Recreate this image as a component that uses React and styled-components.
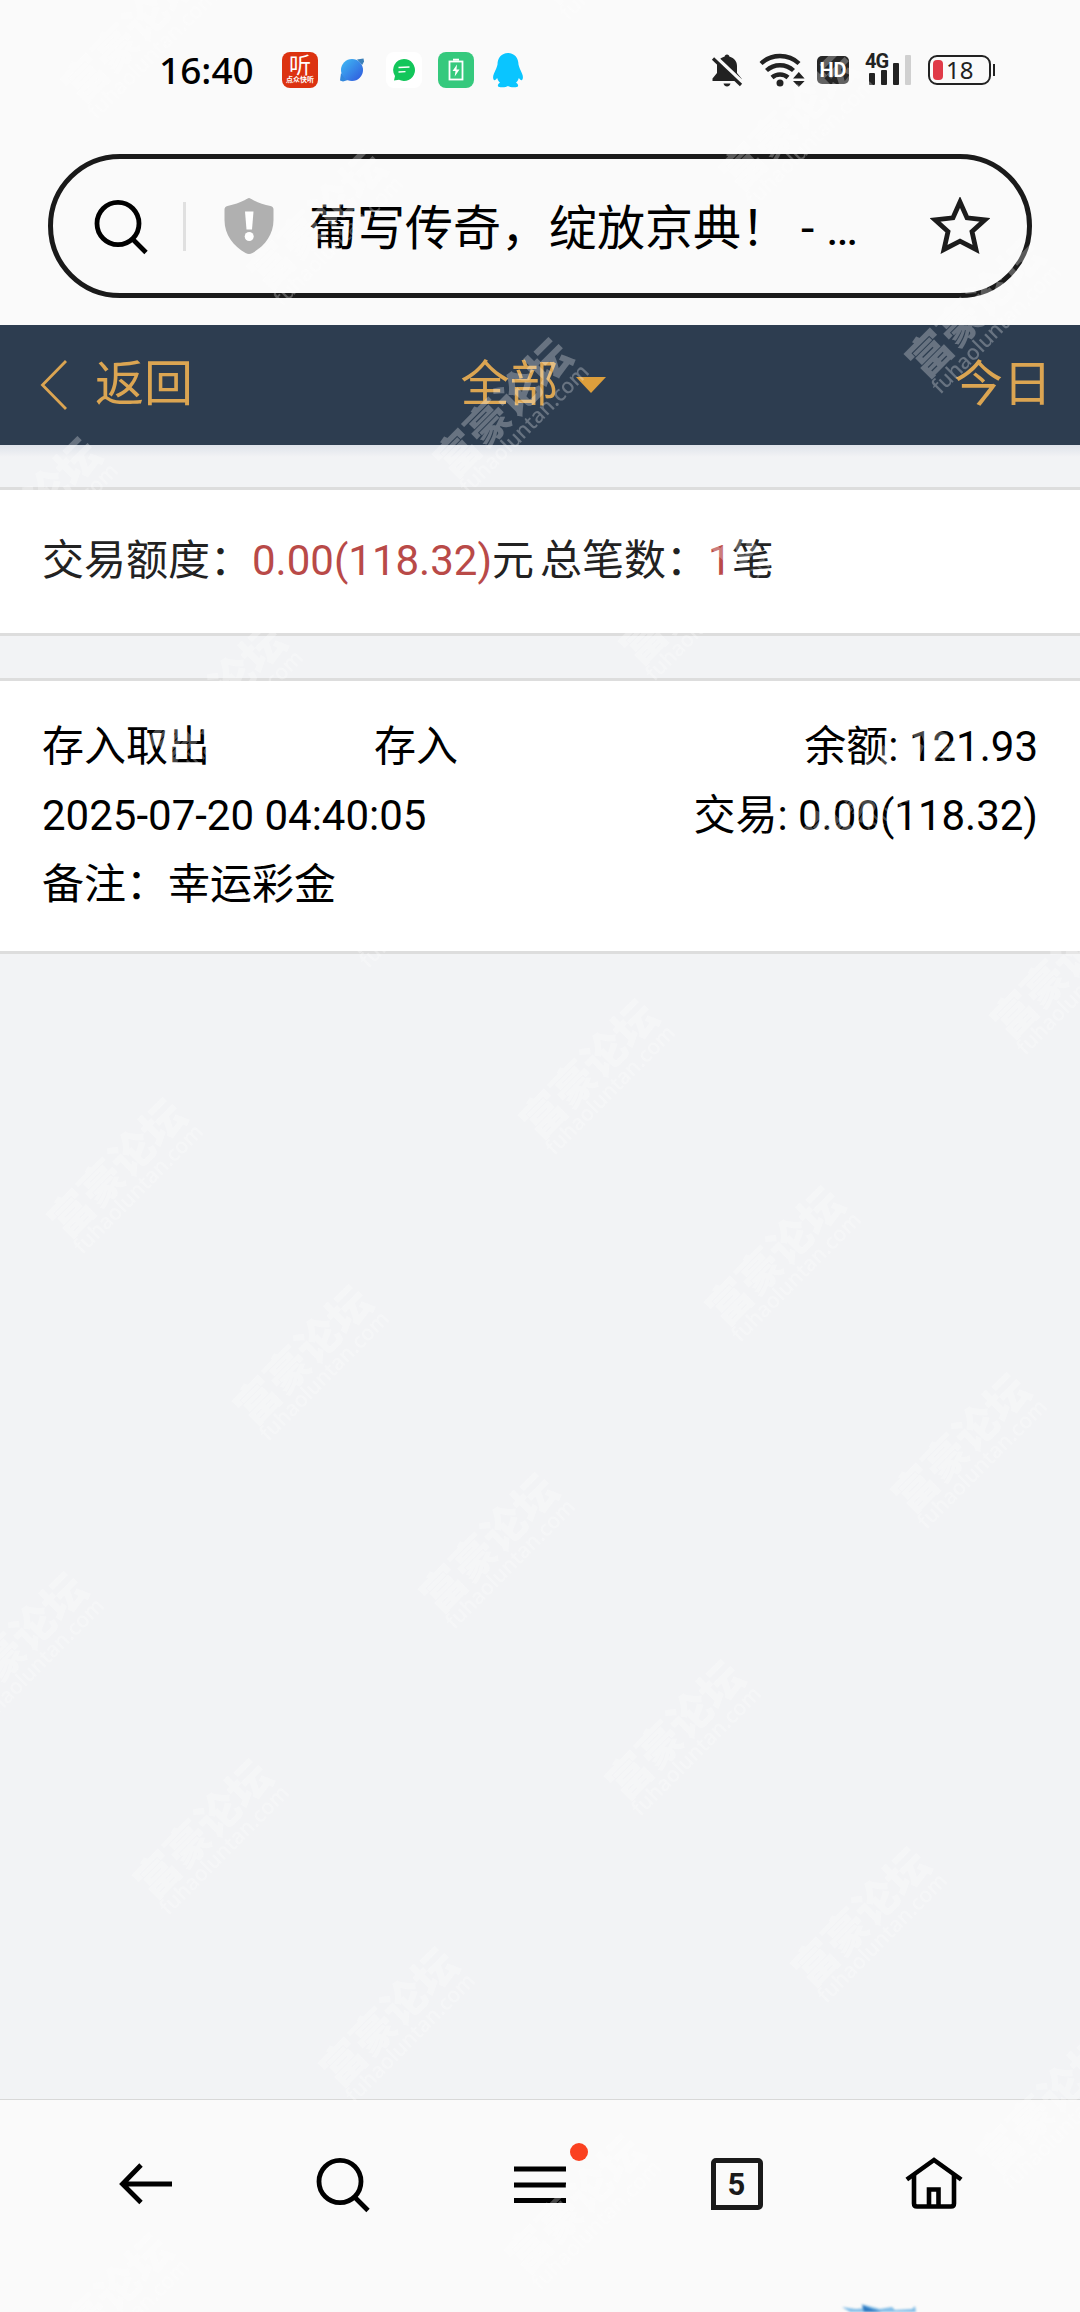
import React from 'react'
import styled, { createGlobalStyle } from 'styled-components'


const marks = []
for (let i = -8; i < 14; i++) {
  for (let j = -4; j < 6; j++) {
    const x = 510 + i * 185.8 + j * 471.5
    const y = 414.6 + i * 187.2 - j * 99.5
    if (x > -60 && x < 1140 && y > -60 && y < 2372) {
      marks.push({ x, y })
    }
  }
}


function StatusBar() {
  return (
    <Status>
      <Clock>16:40</Clock>
      <AppIcons>
        <ListenTile>
          <ListenBig>听</ListenBig>
          <ListenSmall>点众快听</ListenSmall>
        </ListenTile>

        <svg width="36" height="36" viewBox="0 0 36 36">
          <defs>
            <linearGradient id="planet" x1="0" y1="0" x2="1" y2="1">
              <stop offset="0" stopColor="#3fbdf5" />
              <stop offset="1" stopColor="#2f55dc" />
            </linearGradient>
          </defs>
          <path d="M23 7.5 29.500 6.500 30 9.500 28.200 13Z" fill="#3b7fb8" />
          <path d="M7 21 6 28.500 9 29.500 14 28Z" fill="#3287dc" />
          <circle cx="18" cy="18" r="11" fill="url(#planet)" />
        </svg>

        <ChatTile>
          <svg width="30" height="30" viewBox="0 0 30 30">
            <path d="M15 4a11 11 0 1 1-5 20.800L5 25.500 6 21A11 11 0 0 1 15 4Z" fill="#12c65a" />
            <path d="M9.500 12.500 20.500 12M9.500 17 16.500 16.700" stroke="#fff" strokeWidth="1.300" />
          </svg>
        </ChatTile>

        <svg width="36" height="36" viewBox="0 0 36 36">
          <rect width="36" height="36" rx="8" fill="#35c97d" />
          <rect x="11.500" y="9.500" width="13" height="18" fill="none" stroke="#fff" strokeWidth="1.800" />
          <path d="M15 7.700h6" stroke="#fff" strokeWidth="2" />
          <path d="M19 12.500 14.500 19h3l-.8 5.500L21.500 17.500h-3Z" fill="#fff" />
        </svg>

        <Penguin width="32" height="36" viewBox="0 0 32 36">
          <path
            d="M16 1C9.500 1 5.500 6 5.500 12.500 5 15 3.500 18 2 21.500c-1.500 3-1 6.500.3 6.700 1 .2 2-1 2.900-2.200.6 2 1.500 3.500 2.800 4.800-2 .8-2.800 3.200-1.500 3.900 3 .9 7.500.6 9.500-.7 2 1.300 6.500 1.600 9.500.7 1.300-.7.5-3.100-1.500-3.900 1.300-1.300 2.200-2.800 2.800-4.800.9 1.200 1.900 2.400 2.900 2.200 1.300-.2 1.800-3.700.3-6.700-1.500-3.500-3-6.500-3.500-9C26.500 6 22.500 1 16 1Z"
            fill="#0ac5ff"
          />
        </Penguin>
      </AppIcons>

      <SystemIcons>
        <svg width="32" height="34" viewBox="0 0 32 34">
          <path d="M16 1.500c1.500 0 2.300 1 2.300 2C23.500 5 26 8.500 26 13v7l4.500 5.500V28h-29v-2.500L6 20v-7c0-4.500 2.500-8 7.700-9.500 0-1 .8-2 2.300-2Z" fill="#222" />
          <path d="M12.500 30.500h7c-.5 2-1.800 3-3.500 3s-3-1-3.500-3Z" fill="#222" />
          <path d="M4 3.500 31 29" stroke="#fafafa" strokeWidth="4" />
          <path d="M2 5.500 30 32" stroke="#222" strokeWidth="3.200" />
        </svg>

        <WifiIcon width="46" height="34" viewBox="0 0 46 34">
          <g fill="none" stroke="#222" strokeWidth="4.400">
            <path d="M2 10.500a28 28 0 0 1 38 0" />
            <path d="M7.500 17.500a20 20 0 0 1 27 0" />
            <path d="M13 24.500a12 12 0 0 1 16 0" />
          </g>
          <circle cx="21" cy="30" r="3.500" fill="#222" />
          <path d="M34 25.500 39.800 19 45.600 25.500ZM34 28 39.800 34 45.600 28Z" fill="#222" />
        </WifiIcon>

        <HdBadge>HD</HdBadge>

        <Signal>
          <SignalLabel>4G</SignalLabel>
          <SignalBar $h={12} />
          <SignalBar $h={15} />
          <SignalBar $h={22} />
          <SignalBar $h={30} $off />
        </Signal>

        <Battery>
          <BatteryLevel />
          18
        </Battery>
        <BatteryTip />
      </SystemIcons>
    </Status>
  )
}


function SearchIcon() {
  return (
    <svg width="58" height="58" viewBox="0 0 58 58" fill="none" stroke="#000" strokeWidth="4.800">
      <ellipse cx="26" cy="26.500" rx="21" ry="21.200" />
      <path d="M40 41.500 54 55.500" />
    </svg>
  )
}


function App() {
  return (
    <Page>
      <GlobalStyle />
      <StatusBar />

      <AddressBar>
        <SearchIcon />
        <Divider />
        <Shield width="50" height="56" viewBox="0 0 50 56">
          <path d="M25 0C26 0 27.500 1.200 29 2c5 2.600 11 4.600 17.500 6 2 .6 3 1.800 3 3.600V22c0 15-9 26-21 33-2.500 1.300-4.500 1.300-7 0C9.500 48 .5 37 .5 22V11.600C.5 9.800 1.500 8.600 3.500 8 10 6.600 16 4.600 21 2c1.500-.8 3-2 4-2Z" fill="#b0b0b0" />
          <path d="M21 13.500h8.500L28 31.500h-5.500Z" fill="#fff" />
          <circle cx="25.200" cy="38.500" r="4.500" fill="#fff" />
        </Shield>
        <PageTitle>葡写传奇，绽放京典！ - …</PageTitle>
        <svg width="60" height="58" viewBox="0 0 60 58" fill="none" stroke="#1c1c1c" strokeWidth="4.800">
          <path d="M30 5 37 20.800 55 22.800 42 34.500 46 52.500 30 44.200 14 52.500 18 34.500 5 22.800 23 20.800Z" />
        </svg>
      </AddressBar>

      <NavBar>
        <NavSide>
          <BackIcon width="28" height="52" viewBox="0 0 28 52">
            <path d="M26 2 2.500 26 26 50" fill="none" stroke="#dba552" strokeWidth="2.800" />
          </BackIcon>
          返回
        </NavSide>
        <NavCenter>
          全部
          <Caret />
        </NavCenter>
        <NavSide $end>今日</NavSide>
      </NavBar>

      <Content>
        <Summary>
          交易额度：<Red>0.00(118.32)</Red>元
          <Count>总笔数：<Red>1</Red>笔</Count>
        </Summary>

        <RecordCard>
          <RecordGrid>
            <span>存入取出</span>
            <span>存入</span>
            <Right>余额: 121.93</Right>
          </RecordGrid>
          <RecordRow>
            <span>2025-07-20 04:40:05</span>
            <span>交易: 0.00(118.32)</span>
          </RecordRow>
          <RecordRow>备注：幸运彩金</RecordRow>
        </RecordCard>
      </Content>

      <Toolbar>
        <Tool>
          <svg width="58" height="58" viewBox="0 0 58 58" fill="none" stroke="#000" strokeWidth="4.800">
            <path d="M55 29H6M24 10 5.500 29 24 47.500" />
          </svg>
        </Tool>
        <Tool>
          <SearchIcon />
        </Tool>
        <Tool>
          <svg width="58" height="58" viewBox="0 0 58 58" stroke="#000" strokeWidth="4.800">
            <path d="M3 14h52M3 30h52M3 45.500h52" />
          </svg>
          <Dot />
        </Tool>
        <Tool>
          <TabCount>5</TabCount>
        </Tool>
        <Tool>
          <svg width="58" height="58" viewBox="0 0 58 58" fill="none" stroke="#000" strokeWidth="4.600">
            <path d="M1.800 24.500 29 5 56.200 24.500" />
            <path d="M9 20v28.500q0 3 3 3h34q3 0 3-3V20" />
            <path d="M24 51V34.500h9.500V51" />
          </svg>
        </Tool>
      </Toolbar>

      <Sticker width="76" height="9" viewBox="0 0 76 9">
        <path d="M0 4 14 6 24 5 19 1 38 6 50 4 53 7 70 6 73 3 74 9H8Z" fill="#5aa8e0" opacity=".75" />
        <path d="M20 2 30 6 40 9H22Z" fill="#2c78c0" />
      </Sticker>

      <MarkLayer>
        {marks.map((m) => (
          <Mark key={`${m.x}-${m.y}`} style={{ left: m.x, top: m.y }}>
            <MarkName>富豪论坛</MarkName>
            <MarkSite>fuhaoluntan.com</MarkSite>
          </Mark>
        ))}
      </MarkLayer>
    </Page>
  )
}

export default App


const GlobalStyle = createGlobalStyle`
* {
  box-sizing: border-box;
}

body {
  margin: 0;
  background: #fafafa;
}

svg {
  display: block;
  flex: none;
}
`

const Page = styled.div`
position: relative;
display: flex;
flex-direction: column;
width: 1080px;
height: 2312px;
overflow: hidden;
background: #fafafa;
font-family: Roboto, "Noto Sans CJK SC", sans-serif;
`

const Status = styled.div`
display: flex;
align-items: center;
height: 154px;
padding: 0 85px 14px 159px;
`

const Clock = styled.div`
width: 123px;
font-family: "Noto Sans", sans-serif;
font-size: 37px;
font-weight: 500;
line-height: 40px;
white-space: nowrap;
`

const AppIcons = styled.div`
display: flex;
align-items: center;
gap: 16px;
`

const Penguin = styled.svg`
margin-left: 2px;
`

const ListenTile = styled.div`
display: flex;
flex-direction: column;
align-items: center;
width: 36px;
height: 36px;
border-radius: 8px;
background: #dc3210;
color: white;
`

const ListenBig = styled.div`
margin-top: 2px;
font-size: 22px;
line-height: 23px;
`

const ListenSmall = styled.div`
font-size: 7px;
font-weight: 700;
line-height: 7px;
white-space: nowrap;
`

const ChatTile = styled.div`
display: flex;
align-items: center;
justify-content: center;
width: 36px;
height: 36px;
border-radius: 8px;
background: white;
`

const SystemIcons = styled.div`
display: flex;
align-items: center;
margin-left: auto;
`

const WifiIcon = styled.svg`
margin-left: 16px;
`

const HdBadge = styled.div`
width: 32px;
height: 28px;
margin-left: 12px;
border-radius: 5px;
background: #262626;
color: white;
font-size: 20px;
font-weight: 700;
line-height: 28px;
text-align: center;
`

const Signal = styled.div`
position: relative;
display: flex;
align-items: flex-end;
gap: 6px;
height: 32px;
margin-left: 20px;
padding-bottom: 1px;
`

const SignalLabel = styled.div`
position: absolute;
left: -4px;
top: -2px;
color: #222;
font-size: 20px;
font-weight: 700;
line-height: 18px;
letter-spacing: -1px;
`

const SignalBar = styled.div`
width: 6px;
height: ${(p) => p.$h}px;
border-radius: 1px;
background: ${(p) => (p.$off ? '#d0d0d0' : '#222')};
`

const Battery = styled.div`
display: flex;
align-items: center;
width: 63px;
height: 30px;
margin-left: 17px;
padding-left: 3px;
border: 2px solid #222;
border-radius: 9px;
color: #222;
font-family: "Noto Sans", sans-serif;
font-size: 24px;
line-height: 26px;
`

const BatteryLevel = styled.div`
width: 10px;
height: 20px;
margin-right: 3px;
border-radius: 4px;
background: #e03a48;
`

const BatteryTip = styled.div`
width: 2px;
height: 12px;
margin-left: 2px;
background: #222;
`

const AddressBar = styled.div`
display: flex;
align-items: center;
flex: none;
width: 984px;
height: 144px;
margin: 0 48px 27px;
padding: 0 37px 0 39px;
border: 5px solid #1a1a1a;
border-radius: 72px;
`

const Divider = styled.div`
width: 3px;
height: 49px;
margin: 0 38px 0 33px;
background: #e0e0e0;
`

const Shield = styled.svg`
margin-right: 35px;
`

const PageTitle = styled.div`
flex: 1;
padding-top: 5px;
font-size: 48px;
font-weight: 400;
line-height: 60px;
white-space: pre;
`

const NavBar = styled.div`
display: grid;
grid-template-columns: 1fr auto 1fr;
align-items: center;
flex: none;
height: 120px;
padding: 0 28px 0 40px;
background: #2d3d50;
color: #dba552;
font-size: 49px;
line-height: 60px;
`

const NavSide = styled.div`
display: flex;
align-items: center;
justify-content: ${(p) => (p.$end ? 'flex-end' : 'flex-start')};
`

const BackIcon = styled.svg`
margin-right: 27px;
`

const NavCenter = styled.div`
display: flex;
align-items: center;
gap: 17px;
margin-right: 26px;
`

const Caret = styled.div`
border: 15px solid transparent;
border-top: 16px solid #dd9f3c;
border-bottom: 0;
`

const Content = styled.div`
flex: 1;
padding-top: 42px;
background: linear-gradient(#dfe3ea, #f2f3f5 12px);
`

const Card = styled.div`
border-top: 3px solid #ddd;
border-bottom: 3px solid #ddd;
background: white;
font-size: 42px;
`

const Summary = styled(Card)`
height: 149px;
margin-bottom: 42px;
padding: 0 42px;
color: #222;
line-height: 142px;
white-space: nowrap;
`

const Count = styled.span`
margin-left: 6px;
`

const Red = styled.span`
color: #b94a48;
`

const RecordCard = styled(Card)`
height: 276px;
padding: 31px 42px;
color: #000;
line-height: 69px;
`

const RecordGrid = styled.div`
display: grid;
grid-template-columns: repeat(3, 1fr);
`

const RecordRow = styled.div`
display: flex;
justify-content: space-between;
`

const Right = styled.span`
text-align: right;
`

const Toolbar = styled.div`
display: flex;
flex: none;
height: 213px;
padding: 54px 48px 0 47px;
border-top: 1px solid #d8d8d8;
background: #fafafa;
`

const Tool = styled.div`
position: relative;
display: flex;
justify-content: center;
align-items: center;
flex: 1;
height: 60px;
`

const Dot = styled.div`
position: absolute;
left: 129px;
top: -11px;
width: 18px;
height: 18px;
border-radius: 50%;
background: #fa4120;
`

const TabCount = styled.div`
width: 52px;
height: 52px;
border: 5px solid #1a1a1a;
border-radius: 5px 5px 5px 0;
color: #1a1a1a;
font-size: 31px;
font-weight: 700;
line-height: 44px;
text-align: center;
`

const Sticker = styled.svg`
position: absolute;
left: 842px;
bottom: 0;
filter: blur(1px);
`

const MarkLayer = styled.div`
position: absolute;
inset: 0;
overflow: hidden;
pointer-events: none;
`

const Mark = styled.div`
position: absolute;
width: 176px;
height: 72px;
margin: -36px 0 0 -88px;
color: white;
opacity: 0.28;
transform: rotate(-45deg) translate(2px, 1px);
white-space: nowrap;
`

const MarkName = styled.div`
font-family: "Noto Sans CJK SC", sans-serif;
font-size: 43px;
font-weight: 900;
line-height: 44px;
`

const MarkSite = styled.div`
font-family: "Noto Sans", sans-serif;
font-size: 21px;
font-weight: 500;
line-height: 20px;
`
